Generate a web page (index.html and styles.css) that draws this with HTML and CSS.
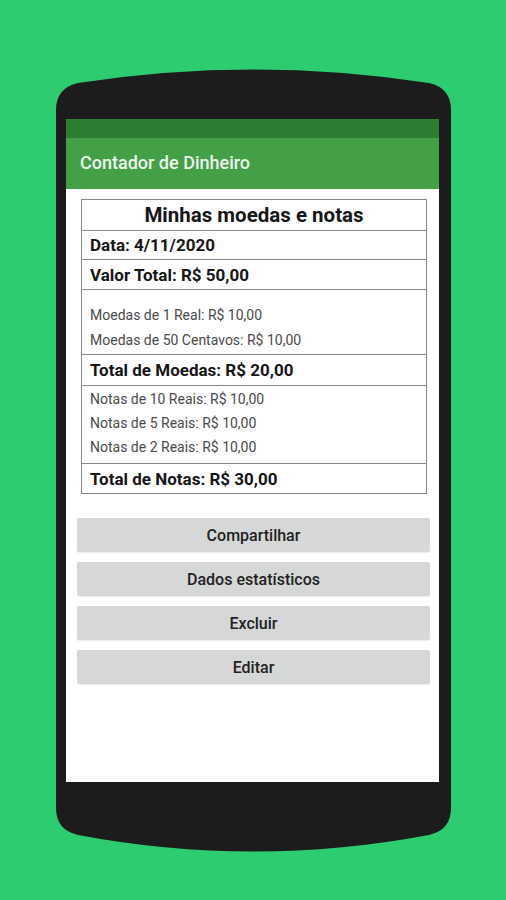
FILE: index.html
```html
<!DOCTYPE html>
<html lang="pt">
<head>
  <meta charset="UTF-8">
  <meta name="viewport" content="width=device-width, initial-scale=1.0">
  <title>Contador de Dinheiro</title>
  <link rel="stylesheet" href="styles.css">
</head>
<body>
  <div class="phone">
    <svg class="phone-body" width="395" height="785" viewBox="0 0 395 785">
      <path d="M0,42 Q0,20 22,15 Q197,-12 373,15 Q395,20 395,42 V740 Q395,762 373,767 Q197,800 22,767 Q0,762 0,740 Z" fill="#1c1c1c"/>
    </svg>
    <div class="screen">
      <div class="status-bar"></div>
      <header class="toolbar">Contador de Dinheiro</header>
      <main class="content">
        <section class="sheet">
          <div class="row title">Minhas moedas e notas</div>
          <div class="row strong date">Data: 4/11/2020</div>
          <div class="row strong">Valor Total: R$ 50,00</div>
          <div class="row list coins">
            <span>Moedas de 1 Real: R$ 10,00</span>
            <span>Moedas de 50 Centavos: R$ 10,00</span>
          </div>
          <div class="row strong moedas">Total de Moedas: R$ 20,00</div>
          <div class="row list notes">
            <span>Notas de 10 Reais: R$ 10,00</span>
            <span>Notas de 5 Reais: R$ 10,00</span>
            <span>Notas de 2 Reais: R$ 10,00</span>
          </div>
          <div class="row strong last">Total de Notas: R$ 30,00</div>
        </section>
        <div class="actions">
          <button>Compartilhar</button>
          <button>Dados estatísticos</button>
          <button>Excluir</button>
          <button>Editar</button>
        </div>
      </main>
    </div>
  </div>
</body>
</html>
```

FILE: styles.css
```css
body, html {
  margin: 0;
  padding: 0;
  height: 100%;
  background: #2ecc71;
  font-family: Roboto, "Liberation Sans", sans-serif;
  overflow: hidden;
}

.phone {
  position: relative;
  width: 395px;
  height: 785px;
  margin: 68px 0 0 56px;
  padding: 51px 0 0 10px;
  box-sizing: border-box;
}

.phone-body {
  position: absolute;
  top: 0;
  left: 0;
}

.screen {
  position: relative;
  width: 373px;
  height: 663px;
  background: #fff;
  display: flex;
  flex-direction: column;
}

.status-bar {
  height: 19px;
  background: #2e7d32;
}

.toolbar {
  height: 51px;
  background: #43a047;
  color: #eef6ee;
  font-size: 18px;
  font-weight: 500;
  display: flex;
  align-items: center;
  padding-left: 14px;
  padding-bottom: 2px;
  box-sizing: border-box;
}

.content {
  padding: 10px 9px 0 11px;
  display: flex;
  flex-direction: column;
}

.sheet {
  margin: 0 3px 0 4px;
  border: 1px solid #8a8a8a;
  display: flex;
  flex-direction: column;
  color: #161616;
}

.row {
  border-bottom: 1px solid #8a8a8a;
  padding: 0 8px;
  box-sizing: border-box;
  display: flex;
  align-items: center;
}

.row.last {
  border-bottom: 0;
  height: 29px;
}

.title {
  height: 31px;
  justify-content: center;
  font-size: 20.5px;
  font-weight: 700;
}

.strong {
  height: 30px;
  font-size: 17px;
  font-weight: 700;
}

.strong.date {
  height: 29px;
}

.strong.moedas {
  height: 31px;
}

.list {
  flex-direction: column;
  align-items: flex-start;
  justify-content: flex-start;
  font-size: 14px;
  color: #4a4a4a;
}

.coins {
  height: 65px;
  padding-top: 13px;
  line-height: 25px;
}

.notes {
  height: 78px;
  padding-top: 1px;
  line-height: 24px;
}

.actions {
  margin-top: 24px;
  display: flex;
  flex-direction: column;
  gap: 10px;
}

.actions button {
  height: 34px;
  border: 0;
  border-radius: 2px;
  background: #d6d7d7;
  color: #222;
  font-family: Roboto, "Liberation Sans", sans-serif;
  font-size: 16px;
  font-weight: 500;
  box-shadow: 0 1px 1px rgba(0, 0, 0, 0.08);
}
```
